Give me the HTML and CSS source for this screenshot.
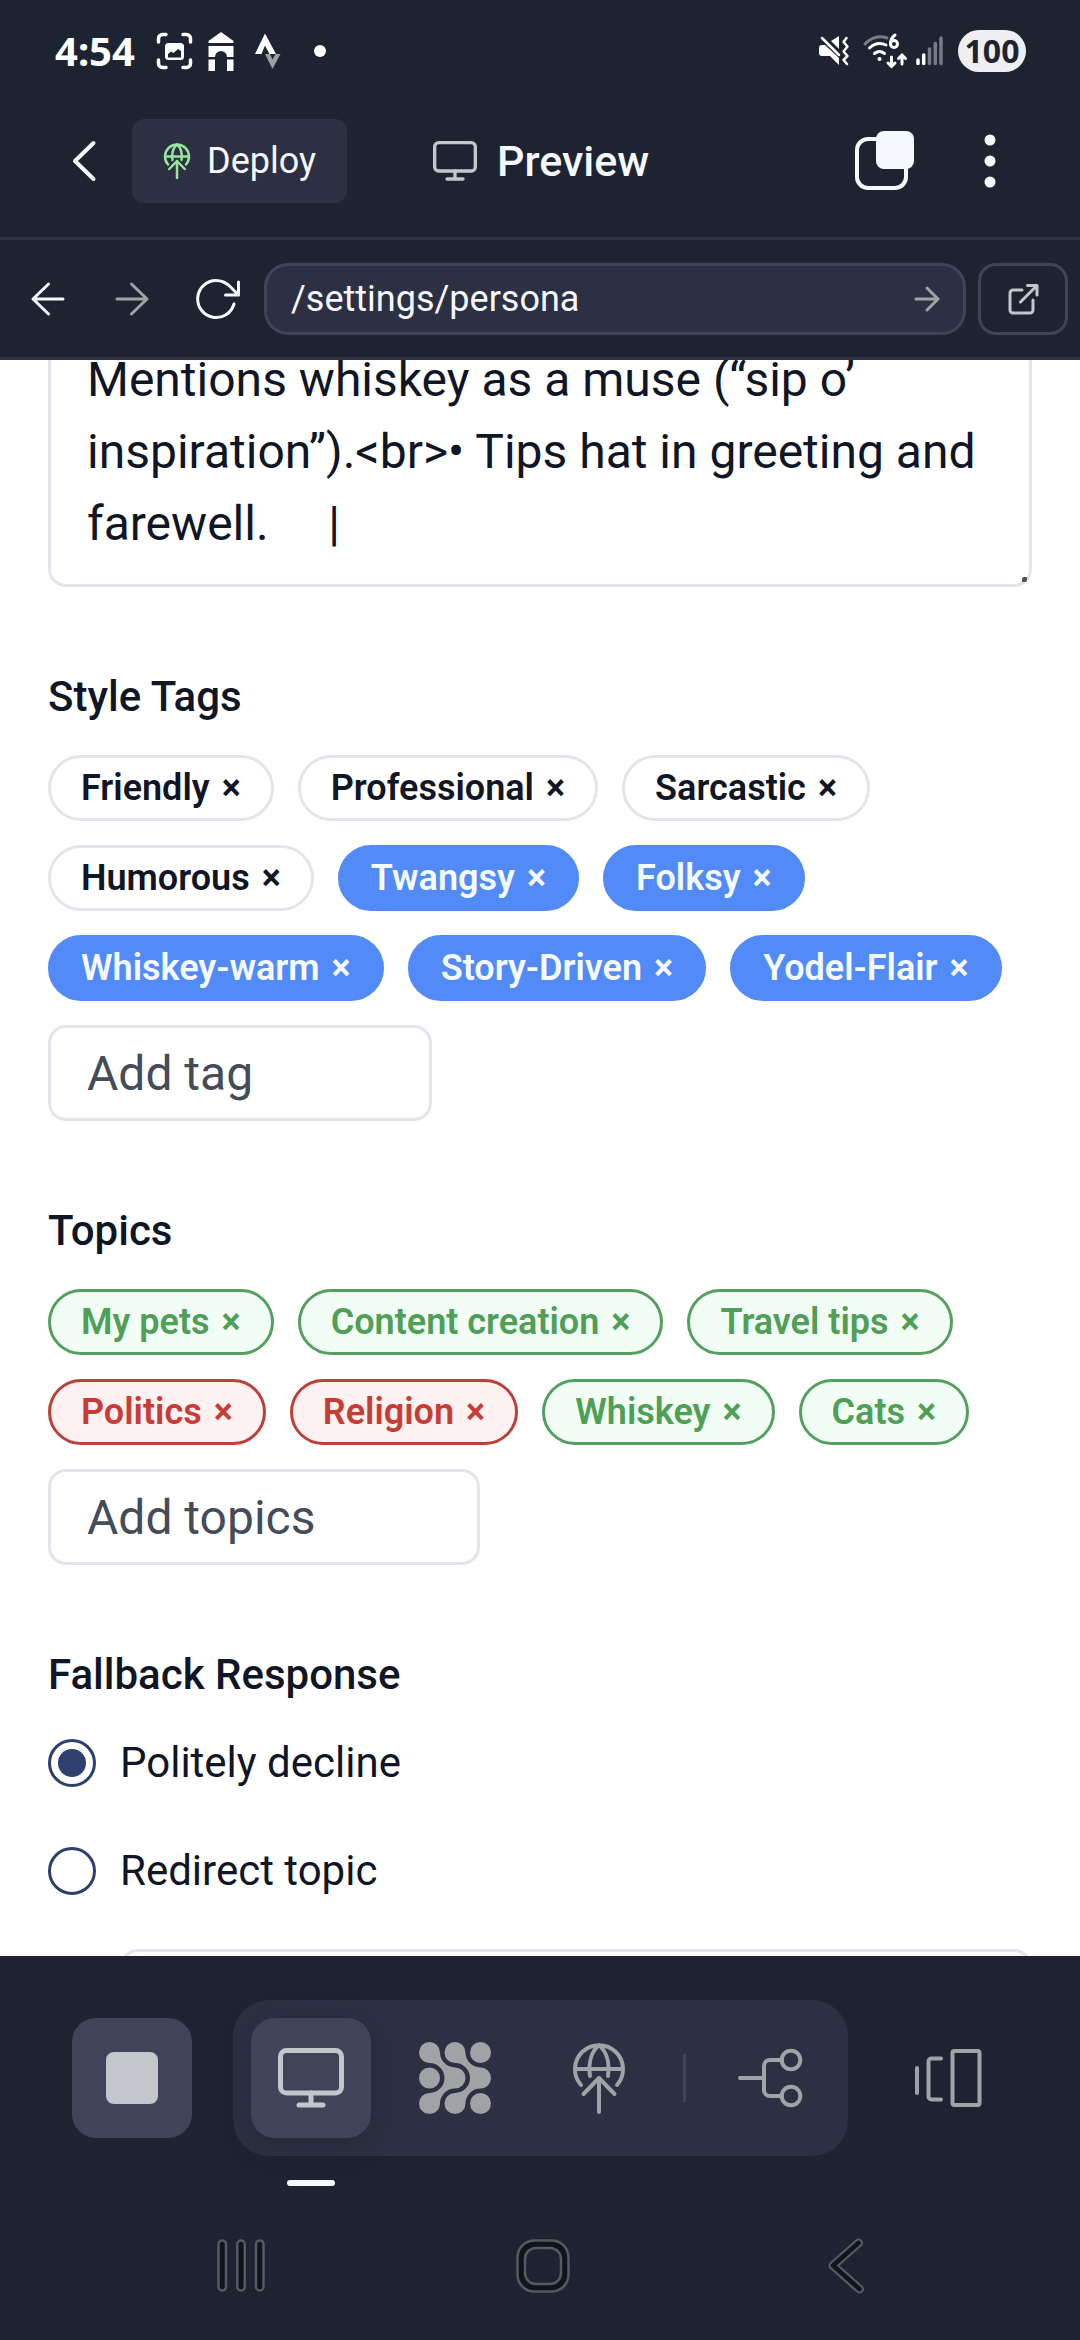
FILE: index.html
```html
<!DOCTYPE html>
<html lang="en">
<head>
<meta charset="utf-8">
<meta name="viewport" content="width=device-width, initial-scale=1">
<title>Persona settings</title>
<link rel="stylesheet" href="styles.css">
</head>
<body>
<svg class="defs" aria-hidden="true">
  <symbol id="globe" viewBox="0 0 72 72">
    <path d="M18 43A24 24 0 1 1 54 43M12 27H60M36 3C29 9 25 20 27 34M36 3C43 9 47 20 45 34M36 70V36M20.5 52L36 36L51.5 52"/>
  </symbol>
  <symbol id="monitor" viewBox="0 0 72 72">
    <rect x="5.500" y="8.500" width="61" height="42.500" rx="6"/>
    <path d="M36 51V62M24 63H48"/>
  </symbol>
</svg>

<header class="top">
  <div class="status">
    <span class="clock">4:54</span>
    <div class="notices">
      <svg width="40" height="44" viewBox="0 0 40 44" fill="none" stroke="#fff" stroke-width="3.500" stroke-linecap="round">
        <path d="M4.500 13V9.500a4 4 0 0 1 4-4H12M29 5.500h3.500a4 4 0 0 1 4 4V13M36.500 31v3.500a4 4 0 0 1-4 4H29M12 38.500H8.500a4 4 0 0 1-4-4V31"/>
        <path fill="#fff" stroke="none" fill-rule="evenodd" d="M14.500 14h12a3.500 3.500 0 0 1 3.500 3.500v10a3.500 3.500 0 0 1-3.500 3.500h-12a3.500 3.500 0 0 1-3.500-3.500v-10a3.500 3.500 0 0 1 3.500-3.500zM14 28.500h13V22l-3-2-4.500 4-2.500-1.500-3 2.500z"/>
      </svg>
      <svg width="40" height="44" viewBox="0 0 40 44" fill="#fff">
        <path d="M20 3l12.500 9v2h-25v-2zM7.500 17h25v11h-6.500a6 6 0 0 0-12 0H7.500zM7.500 30.500h6.500v11.500H7.500zM26 30.500h6.500v11.500H26z"/>
      </svg>
      <svg width="40" height="44" viewBox="0 0 40 44">
        <path fill="#9b9da5" d="M17 25h5l2.500 5.500L27.500 25h5l-8 15z"/>
        <path fill="#fff" d="M17 4.500l11 20.500h-6.500L17 16.500 13.500 25H7z"/>
      </svg>
      <svg width="40" height="44" viewBox="0 0 40 44" fill="#fff"><circle cx="25" cy="22" r="6"/></svg>
    </div>
    <div class="signals">
      <svg width="36" height="44" viewBox="0 0 36 44">
        <path fill="#fff" d="M1 19q0-3 3-3h3l14 13v7l-9-9H4q-3 0-3-3zM13 12l8-5v13z"/>
        <path fill="none" stroke="#fff" stroke-width="2.500" stroke-linecap="round" stroke-linejoin="round" d="M4 9l17 17M28.500 9l-3 4 4 4.500-4 5 4 4.500-4 4 3.500 4"/>
      </svg>
      <svg width="46" height="44" viewBox="0 0 46 44" fill="none" stroke="#fff" stroke-width="3" stroke-linecap="round">
        <path stroke="#777b87" d="M3 15Q13 5 25 9"/>
        <path d="M7.500 19Q15 12 24 16M12.500 24.500q5-4 10 0M33 6q-4 3-4.500 8M29.500 28v9M26 34l3.500 3.500 3.500-3.500M40 35v-9M36.500 29.500l3.500-3.500 3.500 3.500"/>
        <circle cx="32" cy="15" r="3.500"/><circle cx="17.500" cy="30" r="2" fill="#fff" stroke="none"/>
      </svg>
      <svg width="34" height="44" viewBox="0 0 34 44" stroke-width="3.500" stroke-linecap="round">
        <path stroke="#fff" d="M2 31v3.500M7.700 26v8.500"/>
        <path stroke="#777b87" d="M13.500 20v14.500M19.300 14.500v20M25 9v25.500"/>
      </svg>
      <span class="battery">100</span>
    </div>
  </div>

  <div class="appbar">
    <button class="icon-btn" aria-label="Back">
      <svg width="48" height="48" viewBox="0 0 48 48" fill="none" stroke="#f5f9fe" stroke-width="4" stroke-linecap="round" stroke-linejoin="round"><path d="M33.500 6L15 24l18.500 18"/></svg>
    </button>
    <button class="deploy">
      <svg width="36" height="36" class="green"><use href="#globe"/></svg>
      <span>Deploy</span>
    </button>
    <h1 class="title">
      <svg width="48" height="48" class="screen"><use href="#monitor"/></svg>
      <span>Preview</span>
    </h1>
    <div class="app-actions">
      <button class="icon-btn" aria-label="Tabs">
        <svg width="60" height="60" viewBox="0 0 60 60"><rect x="2" y="8" width="49" height="49" rx="11" fill="none" stroke="#f5f9fe" stroke-width="4"/><rect x="21" y="0" width="38" height="38" rx="8" fill="#f5f9fe"/></svg>
      </button>
      <button class="icon-btn" aria-label="More">
        <svg width="48" height="60" viewBox="0 0 48 60" fill="#f5f9fe"><circle cx="24" cy="9" r="5.500"/><circle cx="24" cy="30" r="5.500"/><circle cx="24" cy="51" r="5.500"/></svg>
      </button>
    </div>
  </div>

  <div class="urlbar">
    <nav class="history">
      <button class="icon-btn" aria-label="Go back">
        <svg width="48" height="48" viewBox="0 0 48 48" class="thin"><path d="M39 24H9M24.500 9L9 24l15.500 15"/></svg>
      </button>
      <button class="icon-btn muted" aria-label="Go forward">
        <svg width="48" height="48" viewBox="0 0 48 48" class="thin"><path d="M9 24h30M23.500 9L39 24 23.500 39"/></svg>
      </button>
      <button class="icon-btn" aria-label="Reload">
        <svg width="48" height="48" viewBox="0 0 48 48" class="thin"><path d="M42 29A18.500 18.500 0 1 1 24 5.500c6 0 10 2 14 6l8 8M46.500 7v13H33.500"/></svg>
      </button>
    </nav>
    <div class="address">
      <input class="address-input" type="text" value="/settings/persona" aria-label="Path">
      <button class="icon-btn muted" aria-label="Go">
        <svg width="36" height="36" viewBox="0 0 36 36" class="thin"><path d="M7 18h22M18 7l11 11-11 11"/></svg>
      </button>
    </div>
    <button class="external" aria-label="Open in new window">
      <svg width="36" height="36" viewBox="0 0 36 36" class="thin"><path d="M17 9H8a3 3 0 0 0-3 3v17a3 3 0 0 0 3 3h17a3 3 0 0 0 3-3V19M22.500 4.500H32V14M32 4.500L15.500 21"/></svg>
    </button>
  </div>
</header>

<main class="page">
  <div class="bio">
    <textarea class="bio-text" rows="3" aria-label="Persona description">Mentions whiskey as a muse (“sip o’ inspiration”).&lt;br&gt;• Tips hat in greeting and farewell.     |</textarea>
    <span class="grip"></span>
  </div>

  <section class="group">
    <h2 class="label">Style Tags</h2>
    <div class="chips">
      <span class="chip">Friendly<button class="remove" aria-label="Remove Friendly">×</button></span>
      <span class="chip">Professional<button class="remove" aria-label="Remove Professional">×</button></span>
      <span class="chip">Sarcastic<button class="remove" aria-label="Remove Sarcastic">×</button></span>
      <span class="chip">Humorous<button class="remove" aria-label="Remove Humorous">×</button></span>
      <span class="chip blue">Twangsy<button class="remove" aria-label="Remove Twangsy">×</button></span>
      <span class="chip blue">Folksy<button class="remove" aria-label="Remove Folksy">×</button></span>
      <span class="chip blue">Whiskey-warm<button class="remove" aria-label="Remove Whiskey-warm">×</button></span>
      <span class="chip blue">Story-Driven<button class="remove" aria-label="Remove Story-Driven">×</button></span>
      <span class="chip blue">Yodel-Flair<button class="remove" aria-label="Remove Yodel-Flair">×</button></span>
      <input class="field tag-field" type="text" placeholder="Add tag" aria-label="Add tag">
    </div>
  </section>

  <section class="group">
    <h2 class="label">Topics</h2>
    <div class="chips">
      <span class="chip allow">My pets<button class="remove" aria-label="Remove My pets">×</button></span>
      <span class="chip allow">Content creation<button class="remove" aria-label="Remove Content creation">×</button></span>
      <span class="chip allow">Travel tips<button class="remove" aria-label="Remove Travel tips">×</button></span>
      <span class="chip deny">Politics<button class="remove" aria-label="Remove Politics">×</button></span>
      <span class="chip deny">Religion<button class="remove" aria-label="Remove Religion">×</button></span>
      <span class="chip allow">Whiskey<button class="remove" aria-label="Remove Whiskey">×</button></span>
      <span class="chip allow">Cats<button class="remove" aria-label="Remove Cats">×</button></span>
      <input class="field topic-field" type="text" placeholder="Add topics" aria-label="Add topics">
    </div>
  </section>

  <section class="group">
    <h2 class="label">Fallback Response</h2>
    <div class="choices">
      <label class="choice"><input type="radio" name="fallback" class="radio" checked>Politely decline</label>
      <label class="choice"><input type="radio" name="fallback" class="radio">Redirect topic</label>
    </div>
    <input class="field redirect-field" type="text" aria-label="Redirect message">
  </section>
</main>

<footer class="bottom">
  <div class="tools">
    <button class="tool filled" aria-label="Stop">
      <svg width="72" height="72" viewBox="0 0 72 72" fill="#c3c7cb"><rect x="10" y="10" width="52" height="52" rx="8"/></svg>
    </button>
    <div class="dock">
      <button class="tool filled current" aria-label="Preview">
        <svg width="72" height="72" class="screen"><use href="#monitor"/></svg>
      </button>
      <button class="tool" aria-label="Apps">
        <svg width="72" height="72" viewBox="0 0 72 72" fill="#9fa3a6">
          <path id="flow" d="M21 10.500A15 15 0 0 0 36 25.500A10.500 10.500 0 0 1 36 46.500A15 15 0 0 0 21 61.500A10.500 10.500 0 1 1 10.500 51A15 15 0 0 0 10.500 21A10.500 10.500 0 1 1 21 10.500Z"/>
          <use href="#flow" x="25.500"/>
          <circle cx="10.500" cy="36" r="10.500"/><circle cx="61.500" cy="10.500" r="10.500"/><circle cx="61.500" cy="61.500" r="10.500"/>
        </svg>
      </button>
      <button class="tool" aria-label="Deployments">
        <svg width="72" height="72" class="line"><use href="#globe"/></svg>
      </button>
      <span class="rule"></span>
      <button class="tool" aria-label="Version control">
        <svg width="72" height="72" viewBox="0 0 72 72" class="line"><path d="M6 36H30M48 18H36a6 6 0 0 0-6 6V48a6 6 0 0 0 6 6H48"/><circle cx="57" cy="18" r="9.300"/><circle cx="57" cy="54" r="9.300"/></svg>
      </button>
    </div>
    <button class="tool" aria-label="Panels">
      <svg width="72" height="72" viewBox="0 0 72 72" class="line"><path d="M5 26V51M29 16.500H19.500a3 3 0 0 0-3 3V54.500a3 3 0 0 0 3 3H29"/><rect x="40.500" y="9" width="27" height="54" rx="2"/></svg>
    </button>
  </div>
  <nav class="system">
    <button class="icon-btn" aria-label="Recents">
      <svg width="60" height="60" viewBox="0 0 60 60" fill="#10131a" stroke="#555963" stroke-width="2.500"><rect x="7.500" y="4.500" width="7.500" height="50" rx="3.750"/><rect x="26.250" y="4.500" width="7.500" height="50" rx="3.750"/><rect x="45" y="4.500" width="7.500" height="50" rx="3.750"/></svg>
    </button>
    <button class="icon-btn" aria-label="Home">
      <svg width="60" height="60" viewBox="0 0 60 60" stroke="#555963" stroke-width="2.500"><rect x="4.500" y="4.500" width="51" height="51" rx="17" fill="#10131a"/><rect x="12" y="12" width="36" height="36" rx="11" fill="#1e2332"/></svg>
    </button>
    <button class="icon-btn" aria-label="System back">
      <svg width="60" height="60" viewBox="0 0 60 60" fill="none" stroke-linecap="round" stroke-linejoin="round"><path stroke="#555963" stroke-width="9" d="M43.500 7L18 29.500l26.500 23.500"/><path stroke="#10131a" stroke-width="4.500" d="M43.500 7L18 29.500l26.500 23.500"/></svg>
    </button>
  </nav>
</footer>
</body>
</html>
```

FILE: styles.css
```css
* { box-sizing: border-box; }

body {
  margin: 0;
  height: 100vh;
  display: flex;
  flex-direction: column;
  overflow: hidden;
  background: #fff;
  color: #111627;
  font-family: Roboto, "Liberation Sans", sans-serif;
}

button, input, textarea {
  margin: 0;
  font: inherit;
  color: inherit;
}

button {
  padding: 0;
  border: 0;
  background: none;
}

svg { display: block; flex: none; }
.defs { position: absolute; width: 0; height: 0; }

/* Shared icon strokes */
.thin, .line, .screen, .green {
  fill: none;
  stroke: currentColor;
  stroke-width: 3;
  stroke-linecap: round;
  stroke-linejoin: round;
}
.line { stroke: #9fa3a6; stroke-width: 4; }
.screen { stroke: #c3c7cb; stroke-width: 5; }
.green { stroke: #98e59c; stroke-width: 5; }
.icon-btn { display: grid; place-items: center; color: #f5f9fe; }
.muted { color: #9fa3a6; }

/* Header */
.top { flex: none; background: #1e2332; color: #f5f9fe; }

.status {
  height: 102px;
  padding: 0 54px 0 55px;
  display: flex;
  align-items: center;
}
.clock {
  font: 700 40px/48px "Noto Sans", sans-serif;
  color: #fff;
}
.notices { display: flex; gap: 7px; margin-left: 19px; }
.signals { display: flex; align-items: center; gap: 8px; margin-left: auto; }
.battery {
  width: 68px;
  border-radius: 21px;
  background: #efeff2;
  color: #1e2332;
  font: 700 32px/42px "Noto Sans", sans-serif;
  text-align: center;
}

.appbar {
  display: flex;
  align-items: center;
  padding: 17px 66px 34px 60px;
  border-bottom: 3px solid #2c3042;
}
.deploy {
  display: flex;
  align-items: center;
  gap: 12px;
  height: 84px;
  margin-left: 24px;
  padding: 0 31px 0 27px;
  border-radius: 12px;
  background: #2c3042;
  font-size: 36px;
}
.title {
  display: flex;
  align-items: center;
  gap: 18px;
  margin: 0 0 0 84px;
  font-size: 43px;
  line-height: 48px;
  font-weight: 500;
}
.app-actions { display: flex; gap: 51px; margin-left: auto; }

.urlbar {
  display: flex;
  align-items: center;
  gap: 12px;
  padding: 23px 12px 22px 24px;
  border-bottom: 3px solid #2c3042;
}
.history { display: flex; gap: 36px; margin-right: 12px; }
.address {
  flex: 1;
  display: flex;
  align-items: center;
  height: 72px;
  padding: 0 18px 0 24px;
  border: 3px solid #3f4459;
  border-radius: 24px;
  background: #2c3042;
}
.address-input {
  flex: 1;
  min-width: 0;
  padding: 0;
  border: 0;
  background: none;
  font-size: 36px;
}
.external {
  display: grid;
  place-items: center;
  width: 90px;
  height: 72px;
  border: 3px solid #3f4459;
  border-radius: 18px;
  color: #c3c7cb;
}

/* Settings page, scrolled so its first field runs under the header */
.page {
  flex: 1;
  min-height: 0;
  overflow: hidden;
  padding: 0 48px;
}
.bio { position: relative; margin-top: -43px; }
.bio-text {
  display: block;
  width: 100%;
  height: 270px;
  padding: 24px 36px;
  border: 3px solid #e2e6ec;
  border-radius: 18px;
  background: #fff;
  font-size: 48px;
  line-height: 72px;
  resize: none;
  overflow: hidden;
}
.grip {
  position: absolute;
  right: 5px;
  bottom: 5px;
  width: 5px;
  height: 5px;
  border-radius: 2px 0;
  background: #50535a;
}

.group { margin-top: 88px; }
.label {
  margin: 0 0 36px;
  font-size: 42px;
  line-height: 44px;
  font-weight: 500;
}
.chips { display: flex; flex-wrap: wrap; gap: 24px; }
.chip {
  display: flex;
  align-items: center;
  gap: 12px;
  height: 66px;
  padding: 0 30px;
  border: 3px solid #e2e6ec;
  border-radius: 33px;
  font-size: 36px;
  font-weight: 600;
}
.blue { border-color: #528bf7; background: #528bf7; color: #f5faff; }
.allow { border-color: #559f60; background: #f2fdf6; color: #4f9f57; }
.deny { border-color: #bd4038; background: #fdf1f1; color: #c73d35; }

.field {
  height: 96px;
  padding: 0 36px;
  border: 3px solid #e2e6ec;
  border-radius: 18px;
  background: #fff;
  font-size: 48px;
}
.field::placeholder { color: #454c59; opacity: 1; }
.tag-field { width: 384px; }
.topic-field { width: 432px; }

.choices { display: grid; gap: 60px; margin-top: 42px; }
.choice {
  display: flex;
  align-items: center;
  gap: 24px;
  font-size: 42px;
  line-height: 48px;
}
.radio {
  appearance: none;
  width: 48px;
  height: 48px;
  padding: 7px;
  border: 3px solid #2f3f6e;
  border-radius: 50%;
}
.radio:checked { background: #2f3f6e content-box; }
.redirect-field {
  display: block;
  width: calc(100% - 72px);
  margin: 54px 0 0 72px;
}

/* Footer */
.bottom { flex: none; background: #1e2332; }
.tools {
  display: flex;
  align-items: center;
  justify-content: space-between;
  padding: 44px 72px 0;
}
.tool {
  display: grid;
  place-items: center;
  width: 120px;
  height: 120px;
  border-radius: 24px;
}
.filled { background: #3f4459; }
.dock {
  display: flex;
  align-items: center;
  gap: 24px;
  padding: 18px;
  border-radius: 36px;
  background: #2c3042;
}
.current { position: relative; box-shadow: 0 6px 24px rgba(30, 35, 50, 0.5); }
.current::after {
  content: "";
  position: absolute;
  top: 162px;
  left: 36px;
  width: 48px;
  height: 6px;
  border-radius: 3px;
  background: #f5f9fe;
}
.rule { width: 3px; height: 48px; background: #3f4459; }
.system {
  display: grid;
  grid-template-columns: repeat(3, 1fr);
  justify-items: center;
  padding: 80px 84px 44px 90px;
}
```
